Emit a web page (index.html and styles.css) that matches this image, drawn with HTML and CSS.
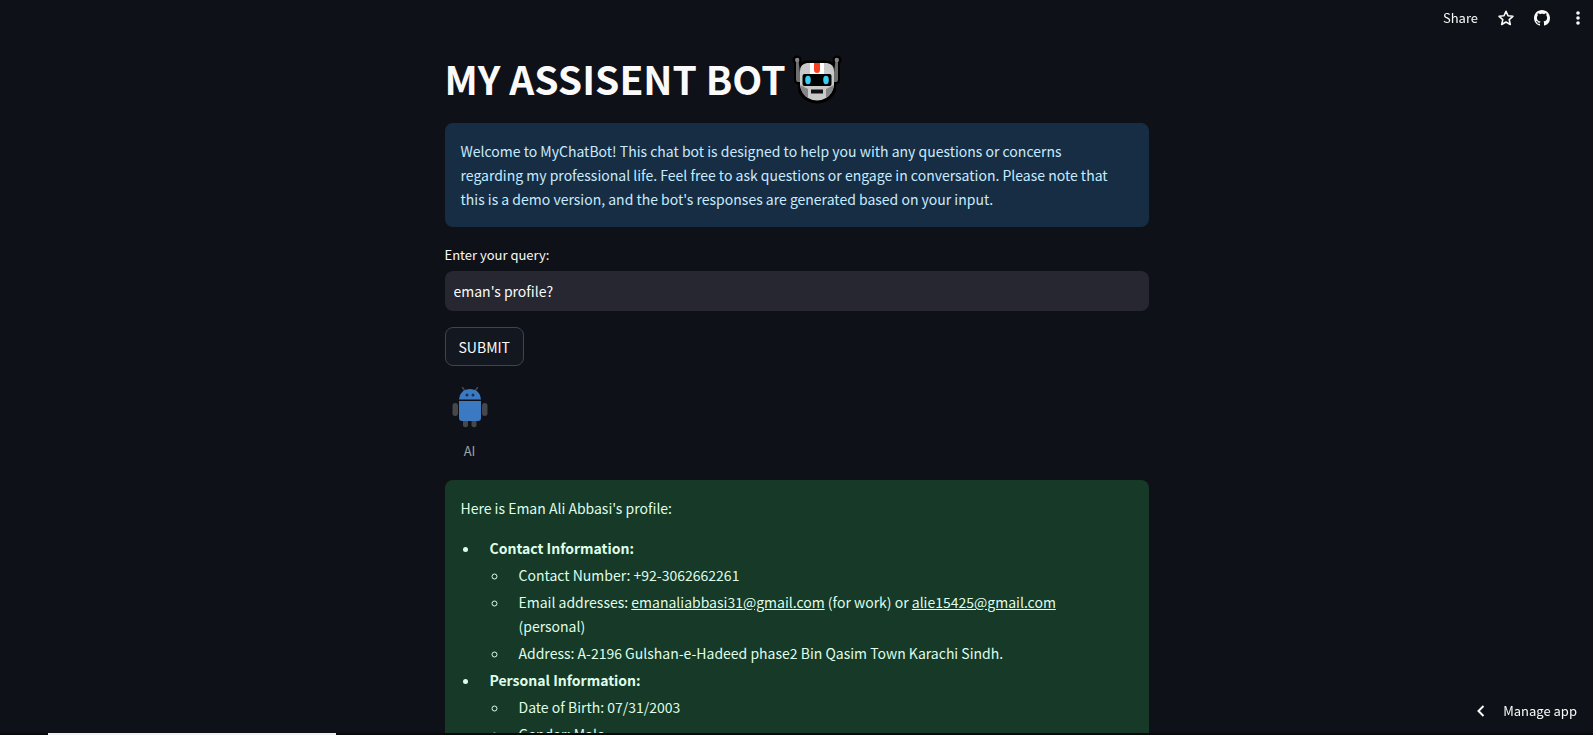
FILE: index.html
```html
<!DOCTYPE html>
<html lang="en">
<head>
<meta charset="utf-8">
<meta name="viewport" content="width=device-width, initial-scale=1">
<title>My Assisent Bot</title>
<link rel="stylesheet" href="styles.css">
</head>
<body>
<header class="toolbar">
  <button class="tool share" type="button">Share</button>
  <button class="tool" type="button" aria-label="Favorite">
    <svg width="16" height="16" viewBox="0 0 16 16" fill="none" stroke="currentColor" stroke-width="1.6" stroke-linejoin="round"><path d="M8 1.3l2 4.5 4.900.5-3.700 3.300 1.100 4.900L8 12l-4.300 2.500 1.100-4.900L1.100 6.300 6 5.800z"/></svg>
  </button>
  <button class="tool" type="button" aria-label="View source on GitHub">
    <svg width="16" height="16" viewBox="0 0 16 16" fill="currentColor"><path d="M8 0C3.580 0 0 3.580 0 8c0 3.540 2.290 6.530 5.470 7.590.4.070.55-.17.55-.38 0-.19-.01-.82-.01-1.490-2.010.37-2.530-.49-2.690-.94-.09-.23-.48-.94-.82-1.130-.28-.15-.68-.52-.01-.53.63-.01 1.080.58 1.230.82.72 1.210 1.870.87 2.330.66.07-.52.28-.87.51-1.070-1.780-.2-3.640-.89-3.640-3.950 0-.87.31-1.590.82-2.150-.08-.2-.36-1.020.08-2.120 0 0 .67-.21 2.200.82.64-.18 1.320-.27 2-.27s1.360.09 2 .27c1.530-1.040 2.200-.82 2.200-.82.44 1.100.16 1.920.08 2.120.51.56.82 1.270.82 2.150 0 3.070-1.870 3.750-3.650 3.950.29.25.54.73.54 1.480 0 1.070-.01 1.930-.01 2.200 0 .21.15.46.55.38A8.010 8.010 0 0 0 16 8c0-4.420-3.580-8-8-8z"/></svg>
  </button>
  <button class="tool" type="button" aria-label="Main menu">
    <svg width="16" height="16" viewBox="0 0 16 16" fill="currentColor"><circle cx="8" cy="3" r="1.800"/><circle cx="8" cy="8" r="1.800"/><circle cx="8" cy="13" r="1.800"/></svg>
  </button>
</header>

<main class="page">
  <div class="column">
    <h1 class="title">MY ASSISENT BOT
      <svg class="robot" viewBox="0 0 50 50" role="img" aria-label="Robot face">
        <g fill="#000" stroke="#000" stroke-width="5" stroke-linejoin="round">
          <path d="M4.500 6v20l4 2v7q2 6 8 9 8.500 4 17 0 6-3 8-9v-7l4-2V6h-1l-2 8-4-5q-3-1-6-1H17q-3 0-6 1l-4 5-2-8z"/>
          <circle cx="5" cy="5" r="2"/><circle cx="45" cy="5" r="2"/>
        </g>
        <path fill="#6f6f6f" d="M4 5h2.500l1.500 13h2v9H6q-2 0-2-3zM46 5h-2.500L42 18h-2v9h4q2 0 2-3z"/>
        <circle cx="5.200" cy="5" r="2.200" fill="#858585"/><circle cx="44.800" cy="5" r="2.200" fill="#858585"/>
        <path fill="#c9c9c9" d="M15 8h20q7 1 7 8v15q-2 8-8 12-9 5-18 0-6-4-8-12V16q0-7 7-8z"/>
        <path fill="#858585" d="M8 30l8 4v9q-7-4-8-13zM42 30l-8 4v9q7-4 8-13z"/>
        <path fill="#fff" d="M18 8h14v11H18z"/>
        <path fill="#f4401f" d="M22 8h6v7q0 3-3 3t-3-3z"/>
        <rect x="10.500" y="19" width="29" height="12" rx="2" fill="#000"/>
        <ellipse cx="16" cy="25" rx="2.800" ry="4.200" fill="#38cdf1"/><ellipse cx="34" cy="25" rx="2.800" ry="4.200" fill="#38cdf1"/>
        <rect x="19" y="34.500" width="12" height="4" fill="#111"/>
      </svg>
    </h1>

    <div class="alert info">
      <p>Welcome to MyChatBot! This chat bot is designed to help you with any questions or concerns regarding my professional life. Feel free to ask questions or engage in conversation. Please note that this is a demo version, and the bot's responses are generated based on your input.</p>
    </div>

    <form class="query">
      <label class="query-label" for="query">Enter your query:</label>
      <input class="query-input" id="query" type="text" value="eman's profile?">
      <button class="submit" type="button">SUBMIT</button>
    </form>

    <figure class="avatar">
      <svg class="android" viewBox="0 0 50 50" aria-hidden="true">
        <g fill="#46474b">
          <rect x="7.500" y="20" width="5.500" height="13" rx="2.700"/><rect x="37" y="20" width="5.500" height="13" rx="2.700"/>
          <path d="M18 38h5v5q-2.500 2.500-5 0zM26.500 38h5v5q-2.500 2.500-5 0z"/>
          <path d="M17.500 4.500l2 3M32.500 4.500l-2 3" stroke="#46474b" stroke-width="1.500" stroke-linecap="round"/>
        </g>
        <path fill="#3b7ac2" d="M14 16.500q1-10.500 11-10.500t11 10.500zM14 18h22v17q0 3-3 3H17q-3 0-3-3z"/>
        <circle cx="22" cy="12" r="1.500" fill="#173252"/><circle cx="28" cy="12" r="1.500" fill="#173252"/>
      </svg>
      <figcaption class="caption">AI</figcaption>
    </figure>

    <div class="alert success">
      <p>Here is Eman Ali Abbasi's profile:</p>
      <ul>
        <li><strong>Contact Information:</strong>
          <ul>
            <li>Contact Number: +92-3062662261</li>
            <li>Email addresses: <a href="mailto:emanaliabbasi31@gmail.com">emanaliabbasi31@gmail.com</a> (for work) or <a href="mailto:alie15425@gmail.com">alie15425@gmail.com</a> (personal)</li>
            <li>Address: A-2196 Gulshan-e-Hadeed phase2 Bin Qasim Town Karachi Sindh.</li>
          </ul>
        </li>
        <li><strong>Personal Information:</strong>
          <ul>
            <li>Date of Birth: 07/31/2003</li>
            <li>Gender: Male</li>
          </ul>
        </li>
      </ul>
    </div>
  </div>
</main>

<button class="manage" type="button">
  <svg width="12" height="12" viewBox="0 0 12 12" fill="none" stroke="currentColor" stroke-width="2"><path d="M8.500 1L3.500 6l5 5"/></svg>
  Manage app
</button>
<div class="edge"><div class="edge-bar"></div></div>
</body>
</html>
```

FILE: styles.css
```css
* {
  box-sizing: border-box;
}

body {
  margin: 0;
  height: 100vh;
  display: flex;
  flex-direction: column;
  overflow: hidden;
  background: #0e1117;
  color: #fafafa;
  font-family: "Noto Sans CJK SC", "Noto Sans", sans-serif;
  font-size: 14px;
  line-height: 24px;
}

button,
input {
  font: inherit;
  color: inherit;
}

.toolbar {
  position: fixed;
  top: 0;
  right: 0;
  display: flex;
  align-items: center;
  gap: 20px;
  height: 36px;
  padding-right: 7px;
}

.tool {
  display: flex;
  padding: 0;
  border: 0;
  background: none;
}

.share {
  font-size: 13px;
}

.page {
  flex: 1;
  min-height: 0;
  overflow: hidden;
  padding: 48px 16px 0;
}

.column {
  width: 100%;
  max-width: 704px;
  margin: 0 auto;
}

.title {
  display: flex;
  align-items: center;
  gap: 6px;
  margin: 0;
  padding-bottom: 15px;
  font-size: 39px;
  font-weight: 700;
  line-height: 60px;
}

.robot {
  width: 50px;
  height: 50px;
  margin-top: 4px;
}

.alert {
  padding: 16px 28px 16px 16px;
  border-radius: 8px;
}

.alert p {
  margin: 0;
}

.info {
  background: #172d43;
  color: #c7ebff;
}

.success {
  background: #173928;
  color: #dffde9;
}

.success a {
  color: inherit;
}

.success ul {
  margin: 0;
  padding: 0;
}

.success > ul {
  margin-top: 16px;
}

.success li {
  margin: 3px 0 3px 19px;
  padding-left: 10px;
}

.query {
  display: flex;
  flex-direction: column;
  align-items: flex-start;
  padding-top: 16px;
}

.query-label {
  padding-bottom: 4px;
  font-size: 13px;
}

.query-input {
  width: 100%;
  height: 40px;
  padding: 0 9px;
  border: 0;
  border-radius: 8px;
  background: #262730;
}

.submit {
  height: 39px;
  margin-top: 16px;
  padding: 0 13px;
  border: 1px solid #41444c;
  border-radius: 8px;
  background: #131720;
}

.avatar {
  width: 50px;
  margin: 17px 0;
}

.android {
  display: block;
  width: 50px;
  height: 50px;
}

.caption {
  padding-top: 6px;
  color: #a0a1a4;
  font-size: 13px;
  text-align: center;
}

.manage {
  position: fixed;
  right: 16px;
  bottom: 12px;
  display: flex;
  align-items: center;
  gap: 16px;
  padding: 0;
  border: 0;
  background: none;
  font-size: 13px;
}

.edge {
  height: 2px;
  padding-left: 3%;
  background: #0a0a0a;
}

.edge-bar {
  width: 288px;
  height: 2px;
  background: #f0f0f0;
}
```
